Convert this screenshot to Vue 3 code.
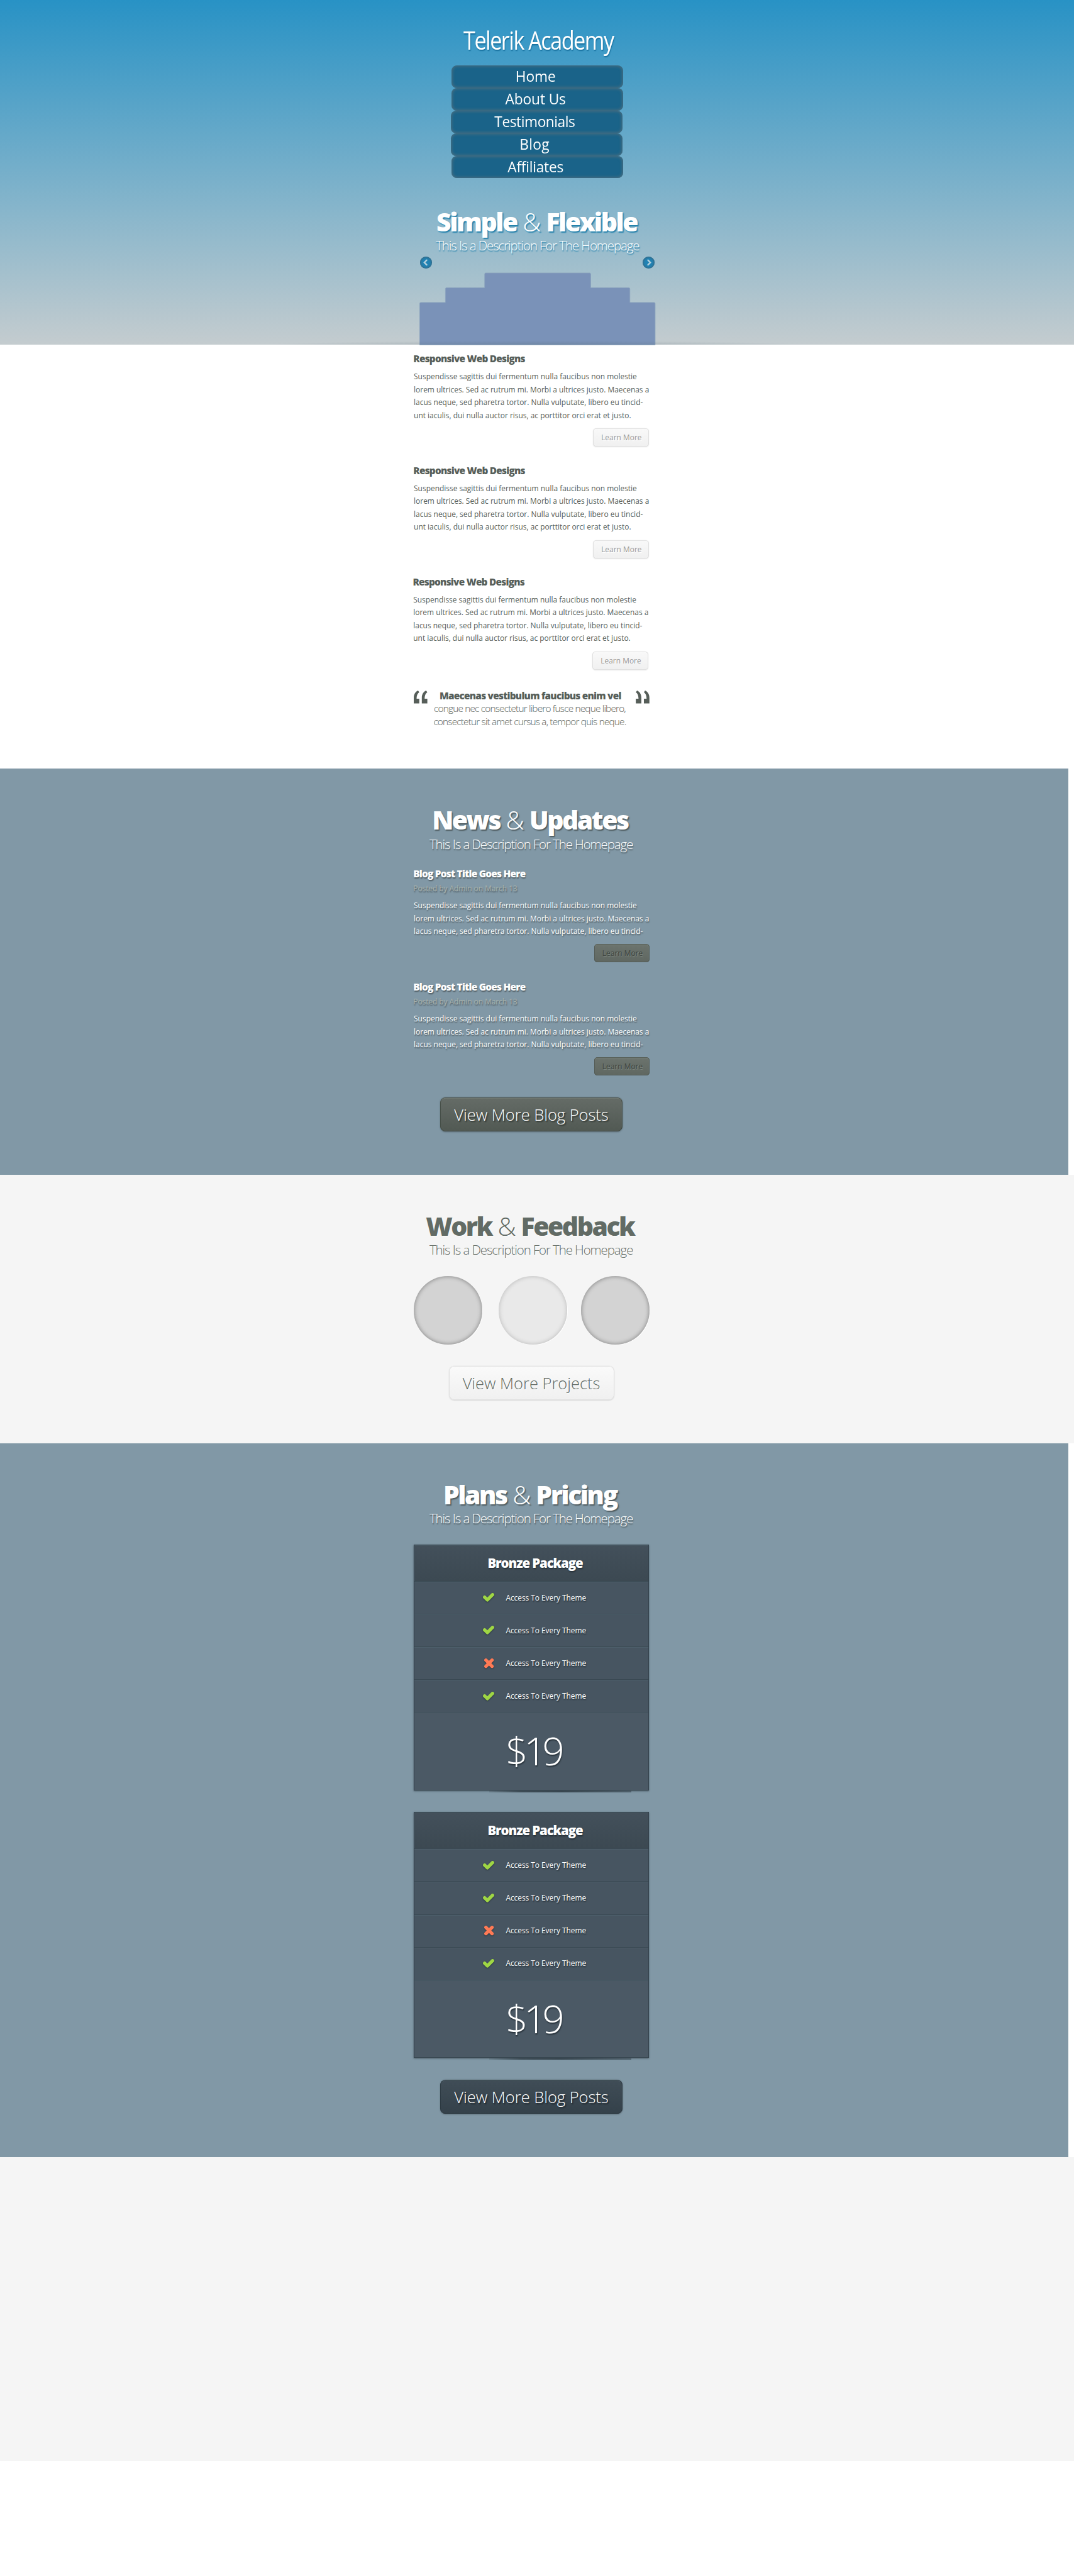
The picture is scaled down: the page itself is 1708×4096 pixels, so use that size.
<script setup>
const menu = [
  { label: 'Home', spacing: '0px' },
  { label: 'About Us', spacing: '-0.15px' },
  { label: 'Testimonials', spacing: '-0.55px', nudge: true },
  { label: 'Blog', spacing: '0.4px', nudge: true },
  { label: 'Affiliates', spacing: '-0.3px' },
]
const lines = [
  'Suspendisse sagittis dui fermentum nulla faucibus non molestie',
  'lorem ultrices. Sed ac rutrum mi. Morbi a ultrices justo. Maecenas a',
  'lacus neque, sed pharetra tortor. Nulla vulputate, libero eu tincid-',
  'unt iaculis, dui nulla auctor risus, ac porttitor orci erat et justo.',
]
const features = [true, true, false, true]
</script>

<template>
  <div class="page">
    <header class="hero">
      <div class="hero-inner">
        <div class="logo">Telerik Academy</div>
        <nav class="menu">
          <a v-for="m in menu" :key="m.label" :class="{ nudge: m.nudge }"><span :style="{ letterSpacing: m.spacing }">{{ m.label }}</span></a>
        </nav>
        <h1 class="title">Simple <span>&amp;</span> Flexible</h1>
        <p class="sub">This Is a Description For The Homepage</p>
        <div class="arrows">
          <span class="arrow"><svg viewBox="0 0 22 22"><path d="M12.4 6.6 8 11l4.4 4.4" /></svg></span>
          <span class="arrow"><svg viewBox="0 0 22 22"><path d="M10 6.6 14.4 11 10 15.4" /></svg></span>
        </div>
        <svg class="stairs" viewBox="0 0 439 134">
          <path d="M.5 134V57q0-2 2-2H48.500V29.500q0-2 2-2H121.500V2q0-2 2-2H317q2 0 2 2V27.500H390q2 0 2 2V55H437q2 0 2 2V134Z" />
        </svg>
      </div>
      <div class="hero-shade"></div>
    </header>

    <section class="intro">
      <div class="col">
        <article v-for="n in 3" :key="n" class="card" :class="{ last: n === 3 }">
          <h3>Responsive Web Designs</h3>
          <p class="body"><span v-for="l in lines" :key="l">{{ l }}</span></p>
          <a class="btn light">Learn More</a>
        </article>
        <blockquote class="quote">
          <svg class="mark" viewBox="0 0 25.500 24"><path d="M0 24V13.500C0 7 3.200 2 8 0L10.300 3.300C7.400 5.200 5.400 8.500 5.300 15.300H10.300V24ZM15 24V13.500C15 7 18.200 2 23 0L25.300 3.300C22.400 5.200 20.400 8.500 20.300 15.300H25.300V24Z" /></svg>
          <p>
            <b>Maecenas vestibulum faucibus enim vel</b>
            <span>congue nec consectetur libero fusce neque libero,</span>
            <span>consectetur sit amet cursus a, tempor quis neque.</span>
          </p>
          <svg class="mark flip" viewBox="0 0 25.500 24"><path d="M0 24V13.500C0 7 3.200 2 8 0L10.300 3.300C7.400 5.200 5.400 8.500 5.300 15.300H10.300V24ZM15 24V13.500C15 7 18.200 2 23 0L25.300 3.300C22.400 5.200 20.400 8.500 20.300 15.300H25.300V24Z" /></svg>
        </blockquote>
      </div>
    </section>

    <section class="band news">
      <div class="col">
        <h2 class="title">News <span>&amp;</span> Updates</h2>
        <p class="sub">This Is a Description For The Homepage</p>
        <div class="posts">
          <article v-for="n in 2" :key="n" class="post">
            <h3>Blog Post Title Goes Here</h3>
            <p class="meta">Posted by Admin on March 13</p>
            <p class="body"><span v-for="l in lines.slice(0, 3)" :key="l">{{ l }}</span></p>
            <a class="btn olive">Learn More</a>
          </article>
        </div>
        <a class="big olive-big">View More Blog Posts</a>
      </div>
    </section>

    <section class="work">
      <div class="col">
        <h2 class="title">Work <span>&amp;</span> Feedback</h2>
        <p class="sub">This Is a Description For The Homepage</p>
        <div class="circles">
          <i class="disc"></i>
          <i class="disc pale"></i>
          <i class="disc"></i>
        </div>
        <a class="big projects">View More Projects</a>
      </div>
    </section>

    <section class="band plans">
      <div class="col">
        <h2 class="title">Plans <span>&amp;</span> Pricing</h2>
        <p class="sub">This Is a Description For The Homepage</p>
        <div v-for="n in 2" :key="n" class="plan">
          <h3>Bronze Package</h3>
          <ul>
            <li v-for="(ok, i) in features" :key="i">
              <span class="icon">
                <svg v-if="ok" width="21" height="16" viewBox="0 0 21 16"><path class="yes" d="M3.200 7.800 8.300 12.700 17.900 3.200" /></svg>
                <svg v-else width="18" height="18" viewBox="0 0 18 18"><path class="no" d="M3.200 3.200 14.700 14.700M14.700 3.200 3.200 14.700" /></svg>
              </span>
              <span class="feature">Access To Every Theme</span>
            </li>
          </ul>
          <div class="price">$19</div>
          <div class="plan-shade"></div>
        </div>
        <a class="big slate">View More Blog Posts</a>
      </div>
    </section>

    <footer class="foot"></footer>
  </div>
</template>

<style>
html,
body {
  background: #fff;
}
</style>

<style scoped>
* {
  box-sizing: border-box;
  margin: 0;
  padding: 0;
}
.page {
  zoom: 0.854;
  width: 2000px;
  height: 4796px;
  overflow: hidden;
  background: #fff;
  font-family: 'Open Sans', 'Noto Sans', sans-serif;
  font-size: 14px;
  line-height: 24px;
  color: #565e59;
}
svg {
  display: block;
  overflow: visible;
}
.col {
  width: 439px;
  margin-left: 770px;
  display: flex;
  flex-direction: column;
}
.title {
  height: 60px;
  margin-left: -5px;
  padding-top: 0.6px;
  font-size: 48px;
  font-weight: 800;
  line-height: 60px;
  letter-spacing: -2.95px;
  text-align: center;
  white-space: nowrap;
}
.title span {
  margin: 0 2.6px 0 1.6px;
  font-weight: 300;
}
.sub {
  height: 30px;
  margin-left: -1px;
  padding-top: 1px;
  font-size: 24px;
  font-weight: 300;
  line-height: 30px;
  letter-spacing: -1.29px;
  text-align: center;
  white-space: nowrap;
}

/* header */
.hero {
  position: relative;
  height: 642px;
  padding-top: 45px;
  background: linear-gradient(#2892c5, #c4cccf);
  color: #fff;
}
.hero-inner {
  display: flex;
  flex-direction: column;
  width: 439px;
  margin-left: 781px;
}
.logo {
  height: 60px;
  margin-left: 5px;
  padding-top: 1.2px;
  font-size: 46px;
  line-height: 60px;
  letter-spacing: -2.1px;
  text-align: center;
  white-space: nowrap;
  text-shadow: 1px 2px 2px #16709e;
  transform: scaleX(0.873);
}
.menu {
  display: flex;
  flex-direction: column;
  width: 319px;
  margin: 17px 0 50px 60px;
}
.menu a {
  height: 42px;
  padding: 0 7px 0 0;
  border-radius: 10px;
  background: #1a6389;
  box-shadow: inset 0 0 6px 1px #54707d;
  font-size: 28px;
  line-height: 39px;
  text-align: center;
}
.menu span {
  display: inline-block;
  transform: scaleX(0.95);
}
.menu .nudge {
  margin: 0 1px 0 -1px;
}
.hero .title {
  margin-left: -2px;
  text-shadow: 2px 2px 2px #2080ac;
}
.hero .sub {
  margin-left: 1px;
  text-shadow: 1px 2px 2px #2080ac;
}
.arrows {
  display: flex;
  justify-content: space-between;
  margin: 6px 1px 8px;
}
.arrow {
  width: 22px;
  height: 22px;
  border-radius: 50%;
  background: #2183b4;
  box-shadow: inset 0 0 4px 1px #3c6379;
}
.arrow path {
  fill: none;
  stroke: #b5d0dd;
  stroke-width: 2.7;
  stroke-linecap: round;
}
.stairs {
  width: 439px;
  height: 134px;
}
.stairs path {
  fill: #7a92b8;
  stroke: #8ba3bd;
  stroke-width: 1;
}
.hero-shade {
  position: absolute;
  left: 500px;
  bottom: 0;
  width: 1000px;
  height: 7px;
  background: radial-gradient(ellipse 50% 100% at 50% 100%, rgba(90, 110, 120, 0.3), rgba(90, 110, 120, 0));
}

/* intro */
.intro {
  height: 789px;
}
.card {
  display: flex;
  flex-direction: column;
  height: 208px;
  padding-top: 13.7px;
}
.card.last {
  height: 207px;
  margin: -1px 1px 0 -1px;
}
h3 {
  height: 24px;
  margin-left: -0.4px;
  padding-top: 1.4px;
  font-size: 18px;
  font-weight: 800;
  line-height: 24px;
  letter-spacing: -0.885px;
  white-space: nowrap;
}
.body {
  padding: 1px 0 0 0.6px;
}
.body span {
  display: block;
  white-space: nowrap;
}
.card .body {
  margin: 9.3px 0 12px;
}
.btn {
  align-self: flex-end;
  width: 104px;
  height: 34px;
  padding-left: 15.6px;
  border-radius: 6px;
  line-height: 34px;
  white-space: nowrap;
}
.btn.light {
  margin-right: 1px;
  color: #989898;
  background: linear-gradient(#f9f9f9, #f0f0f0);
  box-shadow: inset 0 0 0 1px #dcdcdc, 0 1px 2px rgba(0, 0, 0, 0.1);
  text-shadow: 1px 1px 0 #fff;
}
.quote {
  display: flex;
  justify-content: space-between;
  height: 72px;
  margin-top: 19px;
}
.quote p {
  width: 368px;
  margin-left: -4px;
  padding-top: 1.4px;
  font-size: 18px;
  text-align: center;
  white-space: nowrap;
}
.quote b,
.quote span {
  display: block;
}
.quote b {
  font-weight: 800;
  letter-spacing: -0.883px;
}
.quote span {
  margin-left: -2px;
  font-weight: 300;
  letter-spacing: -0.953px;
}
.mark {
  width: 25.5px;
  height: 24px;
  margin-top: 3px;
  fill: #565e59;
}
.mark.flip {
  transform: scaleX(-1);
}

/* coloured bands */
.band {
  width: 1990px;
  background: #8198a6;
  color: #fff;
}
.band .title {
  text-shadow: 2px 2px 2px #4d5a5e;
}
.band .sub {
  text-shadow: 1px 2px 2px #4d5a5e;
}
.news {
  height: 756px;
  padding-top: 65.4px;
}
.posts {
  margin-top: 28.3px;
}
.post {
  display: flex;
  flex-direction: column;
  height: 211px;
  text-shadow: 1px 2px 2px #4f5c62;
}
.meta {
  height: 24px;
  margin: 3px 0 8px -0.4px;
  padding-top: 1px;
  color: #a9b2ab;
  letter-spacing: -0.06px;
}
.post .body {
  margin-bottom: 11.3px;
}
.btn.olive {
  margin-right: -1px;
  color: #3d443e;
  background: linear-gradient(#6c746e, #5f6761);
  box-shadow: inset 0 0 0 1px #505852, inset 0 2px 0 #78817a;
  text-shadow: 1px 1px 0 #7b847e;
}
.big {
  width: 340px;
  height: 64px;
  margin-left: 49.5px;
  border-radius: 10px;
  font-size: 30px;
  font-weight: 300;
  line-height: 65px;
  letter-spacing: -0.09px;
  text-align: center;
  white-space: nowrap;
}
.olive-big {
  margin-top: 6.3px;
  background: linear-gradient(#656c67, #515953);
  box-shadow: inset 0 0 0 1px #414a43, inset 0 2px 0 #737b74, 0 1px 3px rgba(0, 0, 0, 0.3);
  text-shadow: 2px 2px 2px #2c332e;
}

/* work */
.work {
  height: 500px;
  padding-top: 65px;
  background: #f5f5f5;
  color: #626b65;
}
.work .title,
.work .sub {
  text-shadow: 1px 1px 0 #fff;
}
.circles {
  display: flex;
  margin: 34px 0 40px;
}
.disc {
  width: 128px;
  height: 127px;
  margin-right: 30.5px;
  border-radius: 50%;
  background: #d3d3d3;
  box-shadow: inset 0 0 7px 1px #8d8d8d, 1px 1px 1px #fff;
}
.disc.pale {
  margin-right: 25.5px;
  background: #e9e9e9;
  box-shadow: inset 0 0 7px 1px #c0c0c0, 1px 1px 1px #fff;
}
.disc:last-child {
  margin-right: -1px;
}
.projects {
  width: 308px;
  margin-left: 65.5px;
  color: #626b65;
  background: linear-gradient(#fafafa, #f0f0f0);
  box-shadow: inset 0 0 0 1px #dcdcdc, 0 1px 2px rgba(0, 0, 0, 0.12);
  text-shadow: 1px 1px 0 #fff;
}

/* plans */
.plans {
  height: 1329px;
  padding-top: 65px;
}
.plans .sub {
  margin-bottom: 34px;
}
.plan {
  position: relative;
  height: 458px;
  margin-bottom: 40px;
  background: #475561;
  box-shadow: 0 1px 3px rgba(30, 40, 48, 0.6);
  text-shadow: 1px 2px 2px #27323a;
}
.plan::after {
  content: '';
  position: absolute;
  inset: 0;
  box-shadow: inset 0 0 0 1px #33414b;
}
.plan h3 {
  height: 68px;
  margin: 0;
  padding: 0 0 0 138px;
  background: linear-gradient(#43505b, #3c4952);
  box-shadow: inset 2px 2px 0 #4a5a65;
  font-size: 24px;
  line-height: 70px;
  letter-spacing: -1.3px;
}
ul {
  list-style: none;
}
li {
  display: flex;
  align-items: center;
  height: 61px;
  padding-left: 129px;
  box-shadow: inset 0 1px 0 #33414b, inset 0 2px 0 #50616d;
  line-height: 61px;
  letter-spacing: -0.05px;
}
.feature {
  padding-top: 1.8px;
}
.icon {
  display: flex;
  justify-content: flex-end;
  width: 21px;
  margin-right: 22px;
  filter: drop-shadow(1px 2px 1px rgba(30, 40, 48, 0.7));
}
.icon path {
  fill: none;
  stroke-width: 6.2;
  stroke-linecap: round;
  stroke-linejoin: round;
}
.icon .yes {
  stroke: #9fd644;
}
.icon .no {
  stroke: #ff7a55;
}
.price {
  height: 146px;
  padding-left: 172px;
  background: #4b5965;
  box-shadow: inset 0 1px 0 #33414b, inset 0 2px 0 #50616d;
  font-size: 72px;
  font-weight: 300;
  line-height: 143px;
  letter-spacing: -7.1px;
}
.plan-shade {
  position: absolute;
  left: 141px;
  top: 458px;
  width: 265px;
  height: 3px;
  background: linear-gradient(90deg, rgba(56, 70, 79, 0.2), rgba(56, 70, 79, 0.9) 22%, #38464f 50%, rgba(56, 70, 79, 0.75) 78%, #4d5e69);
}
.slate {
  background: linear-gradient(#404d57, #34414a);
  box-shadow: inset 0 0 0 1px #2b3840, inset 0 2px 0 #4b5963, 0 1px 3px rgba(0, 0, 0, 0.3);
  text-shadow: 2px 2px 2px #1d262c;
}
.foot {
  height: 566px;
  background: #f5f5f5;
}
</style>
